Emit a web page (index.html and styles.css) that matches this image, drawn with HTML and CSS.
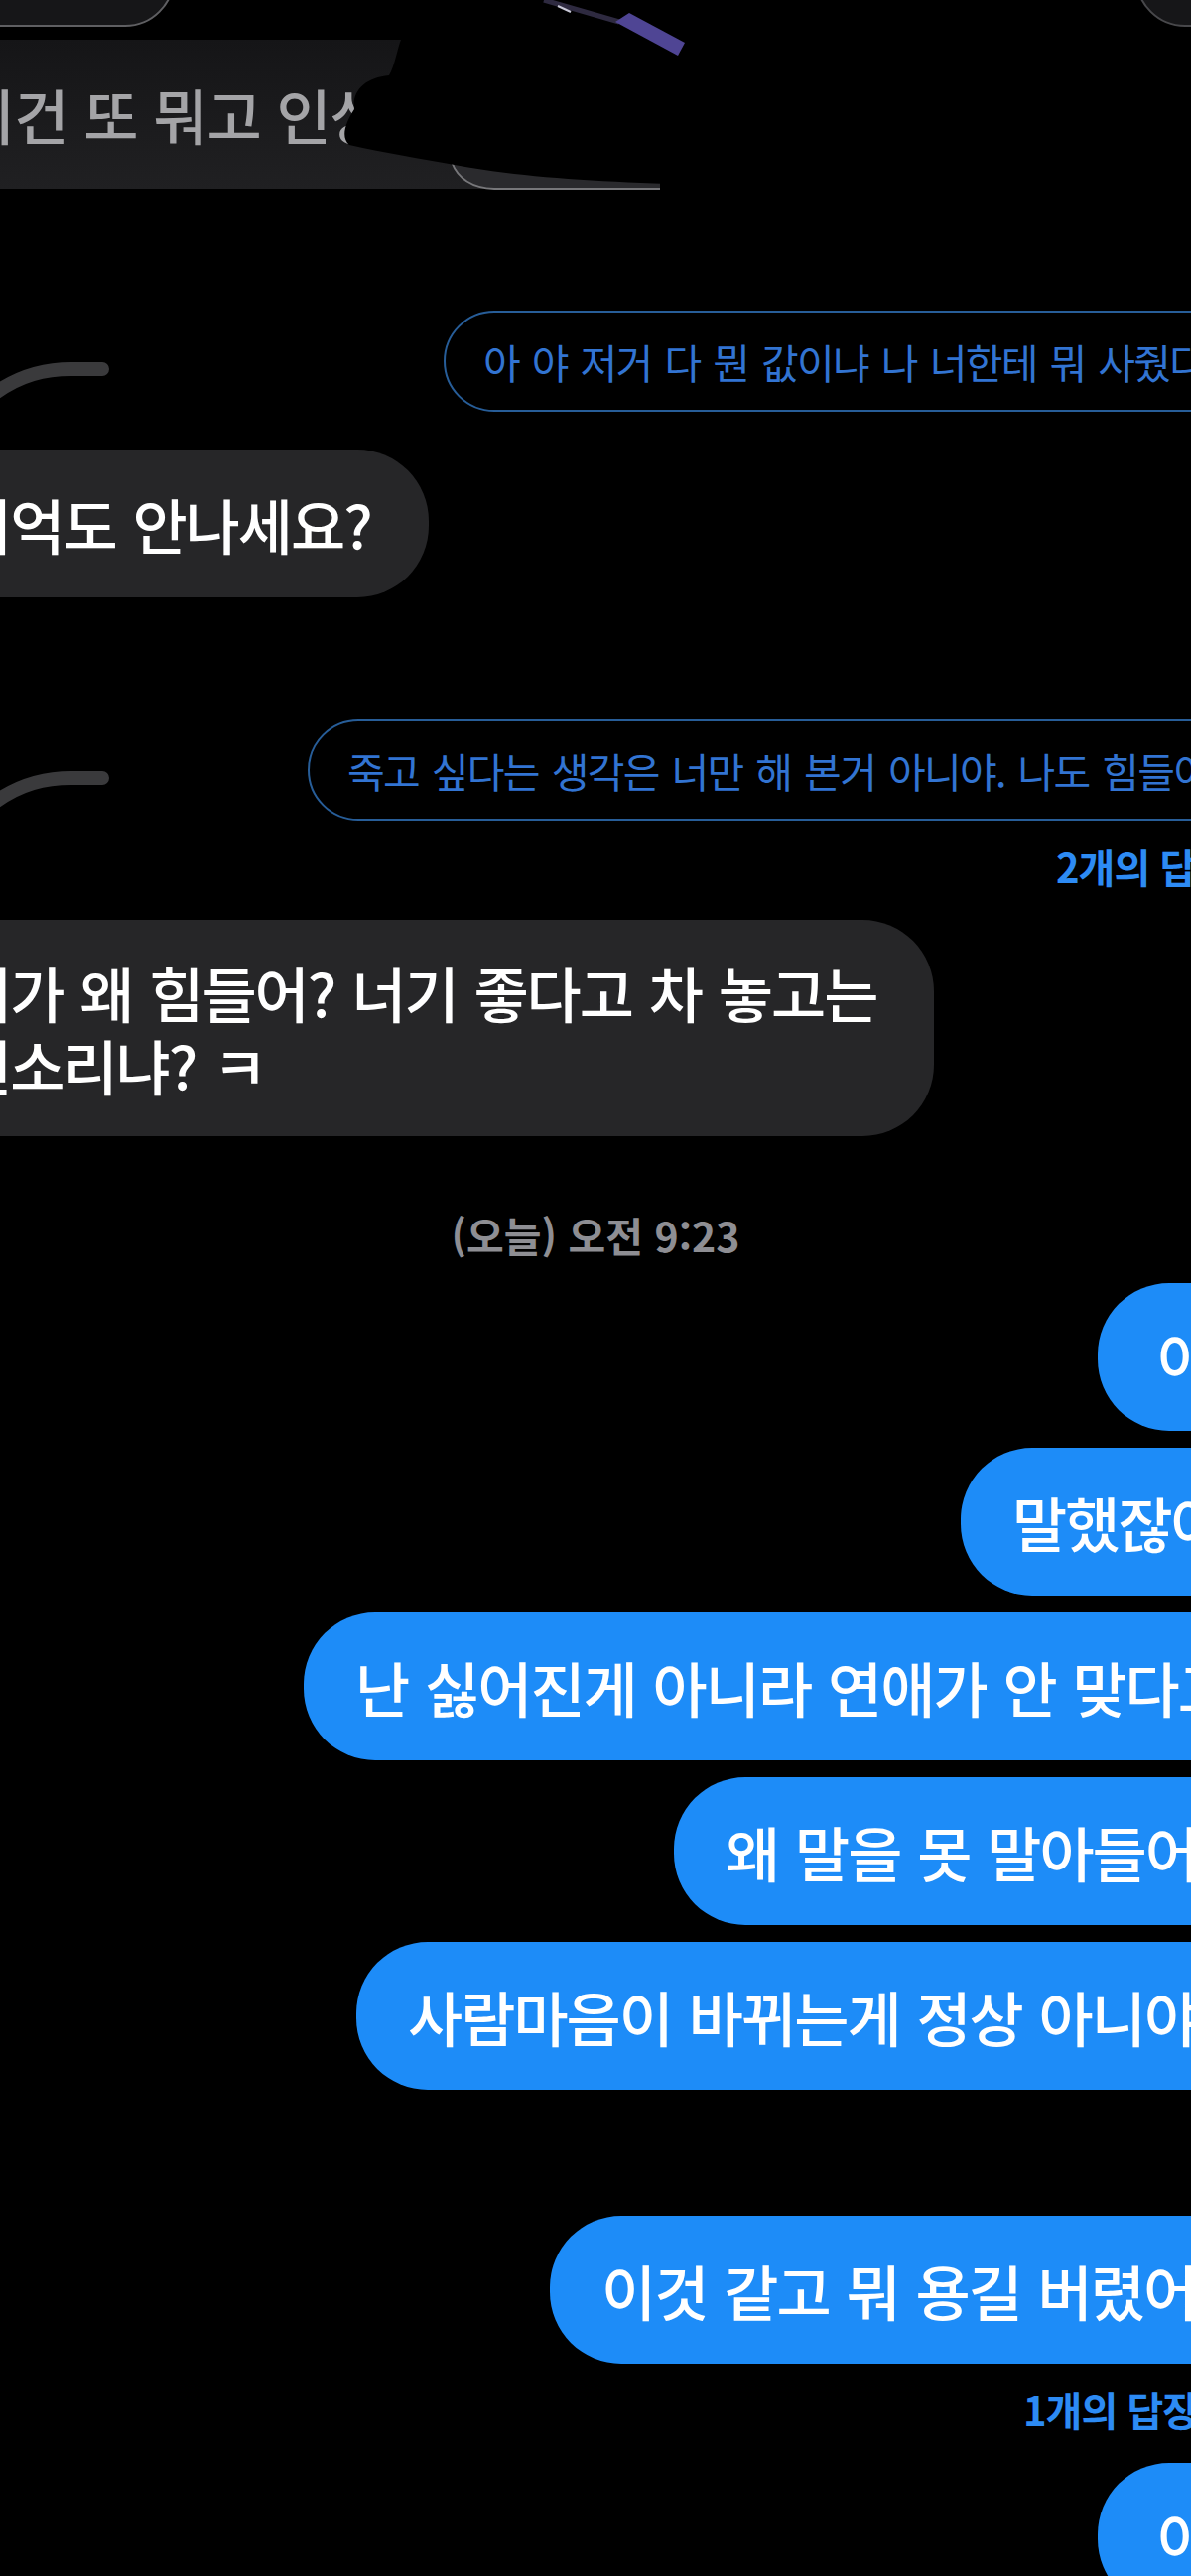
FILE: index.html
```html
<!DOCTYPE html>
<html lang="ko">
<head>
    <meta charset="UTF-8">
    <meta name="viewport" content="width=device-width, initial-scale=1.0">
    <title>메시지</title>
    <link rel="stylesheet" href="styles.css">
</head>
<body>
    <main class="chat">
        <!-- attached photo, cropped -->
        <div class="photo">
            <div class="photo-card left"></div>
            <div class="photo-card right"></div>
            <div class="photo-caption"><span>이건 또 뭐고 인상</span></div>
            <svg class="photo-overlay" width="1200" height="200" viewBox="0 0 1200 200">
                <path d="M458 166 Q466 188 496 189 L665 189 L665 181 C600 179 520 175 458 166 Z" fill="#2a2a2d"/>
                <path d="M455 163 Q465 189 498 190 L665 190" fill="none" stroke="#77777a" stroke-width="2"/>
                <path d="M404 30 L404 40 C400 50 398 66 392 76 C368 78 354 92 357 110 C348 124 343 138 352 146 C388 154 425 160 458 166 C520 178 600 183 700 186 L700 30 Z" fill="#000"/>
                <line x1="548" y1="0" x2="624" y2="22" stroke="#2e2a40" stroke-width="5"/>
                <line x1="562" y1="6" x2="575" y2="12" stroke="#c9c9d8" stroke-width="2"/>
                <polygon points="620,22 634,13 690,43 683,56" fill="#4f4594"/>
            </svg>
        </div>

        <div class="reply r1">
            <svg class="thread" width="110" height="50" viewBox="0 0 110 50">
                <path d="M103 9 H72 C45 9 20 15 -6 34" fill="none" stroke="#3a3a3c" stroke-width="14" stroke-linecap="round"/>
            </svg>
            <div class="quote">아 야 저거 다 뭔 값이냐 나 너한테 뭐 사줬다</div>
        </div>
        <div class="bubble in g1">기억도 안나세요?</div>

        <div class="reply r2">
            <svg class="thread" width="110" height="50" viewBox="0 0 110 50">
                <path d="M103 9 H72 C45 9 20 15 -6 34" fill="none" stroke="#3a3a3c" stroke-width="14" stroke-linecap="round"/>
            </svg>
            <div class="quote">죽고 싶다는 생각은 너만 해 본거 아니야. 나도 힘들어</div>
        </div>
        <div class="replies c2">2개의 답장</div>
        <div class="bubble in g2">너가 왜 힘들어? 너기 좋다고 차 놓고는<br>뭔소리냐? ㅋ</div>

        <div class="stamp">(오늘) 오전 9:23</div>

        <div class="bubble out lone b1">이</div>
        <div class="bubble out b2">말했잖아</div>
        <div class="bubble out b3">난 싫어진게 아니라 연애가 안 맞다고</div>
        <div class="bubble out b4">왜 말을 못 말아들어</div>
        <div class="bubble out b5">사람마음이 바뀌는게 정상 아니야</div>
        <div class="bubble out b6">이것 같고 뭐 용길 버렸어</div>
        <div class="replies c1">1개의 답장</div>
        <div class="bubble out lone b7">이</div>
    </main>
</body>
</html>
```

FILE: styles.css
```css
html, body {
    margin: 0;
    background: #000;
}
body {
    width: 1200px;
    height: 2596px;
    overflow: hidden;
    font-family: "Noto Sans CJK KR", "Noto Sans", sans-serif;
    color: #fff;
}
.chat {
    display: flex;
    flex-direction: column;
    align-items: flex-start;
}

/* photo */
.photo {
    position: relative;
    width: 1200px;
    height: 200px;
    flex-shrink: 0;
    overflow: hidden;
}
.photo-card {
    position: absolute;
    top: -100px;
    height: 123px;
    border: 2px solid #5f5f62;
    border-radius: 50px;
    background: #161618;
}
.photo-card.left {
    left: -60px;
    width: 232px;
}
.photo-card.right {
    left: 1144px;
    width: 120px;
    border-color: #48484b;
}
.photo-caption {
    position: absolute;
    left: 0;
    top: 40px;
    width: 665px;
    height: 150px;
    background: linear-gradient(#151517, #202022);
}
.photo-caption span {
    display: block;
    margin-left: -40px;
    font-size: 60px;
    line-height: 150px;
    font-weight: 500;
    letter-spacing: -1px;
    color: #a4a4a7;
    white-space: nowrap;
}
.photo-overlay {
    position: absolute;
    left: 0;
    top: 0;
}

/* quoted replies */
.reply {
    display: flex;
    align-items: flex-start;
    flex-shrink: 0;
}
.reply.r1 {
    margin-top: 113px;
}
.reply.r2 {
    margin-top: 123px;
}
.thread {
    flex-shrink: 0;
    margin-top: 50px;
}
.quote {
    flex-shrink: 0;
    padding: 24px 40px 24px 38px;
    border: 2px solid #275d98;
    border-radius: 51px;
    font-size: 41px;
    line-height: 50px;
    letter-spacing: -1.7px;
    word-spacing: 3px;
    color: #3274d2;
    white-space: nowrap;
}
.r1 .quote {
    margin-left: 337px;
}
.r2 .quote {
    margin-left: 200px;
}

.replies {
    font-size: 40px;
    line-height: 44px;
    font-weight: 700;
    letter-spacing: -1px;
    color: #2d8bf4;
    white-space: nowrap;
    flex-shrink: 0;
}
.replies.c2 {
    margin-top: 24px;
    margin-left: 1064px;
}
.replies.c1 {
    margin-top: 24px;
    margin-left: 1031px;
}

/* bubbles */
.bubble {
    flex-shrink: 0;
    padding: 38px 58px 38px 52px;
    border-radius: 72px;
    font-size: 60px;
    line-height: 73px;
    font-weight: 500;
    letter-spacing: -2px;
    word-spacing: 2px;
    white-space: nowrap;
}
.bubble.in {
    background: #262628;
    margin-left: -95px;
}
.bubble.out {
    background: #1d8cf8;
    padding-right: 120px;
}
.bubble.lone {
    padding-left: 59px;
}
.g1 {
    margin-top: 38px;
}
.g2 {
    margin-top: 32px;
    padding-top: 36px;
    padding-bottom: 36px;
}

.stamp {
    align-self: center;
    margin-top: 76px;
    font-size: 41px;
    line-height: 46px;
    font-weight: 600;
    color: #8e8e93;
    white-space: nowrap;
}

.b1 { margin-top: 26px; margin-left: 1106px; }
.b2 { margin-top: 17px; margin-left: 968px; }
.b3 { margin-top: 17px; margin-left: 306px; }
.b4 { margin-top: 17px; margin-left: 679px; }
.b5 { margin-top: 17px; margin-left: 359px; }
.b6 { margin-top: 127px; margin-left: 554px; }
.b7 { margin-top: 32px; margin-left: 1106px; }
```
